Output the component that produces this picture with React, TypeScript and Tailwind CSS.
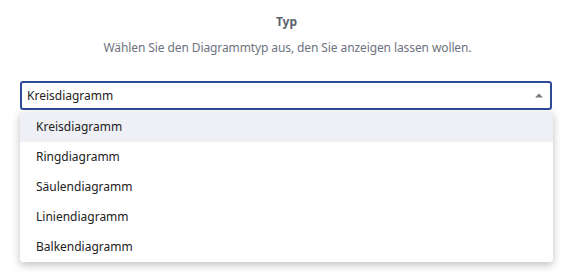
import React from "react";

const items = ["Kreisdiagramm", "Ringdiagramm", "Säulendiagramm", "Liniendiagramm", "Balkendiagramm"];

export default function App() {
  return (
    <div
      className="w-[567px] h-[278px] bg-white overflow-hidden"
      style={{ fontFamily: '"Segoe UI", "Noto Sans", "Open Sans", sans-serif' }}
    >
      <div className="pt-[13px] flex flex-col items-center">
        <div className="text-[12px] leading-[18px] font-bold text-[#5b5f6e] ml-[6px]">Typ</div>
        <div className="mt-[8px] text-[12px] leading-[18px] text-[#6e7280] ml-[8px] tracking-[-0.1px]">
          Wählen Sie den Diagrammtyp aus, den Sie anzeigen lassen wollen.
        </div>
      </div>
      <div className="ml-[20px] w-[532px] mt-[24px] relative">
        <div className="h-[29px] border-2 border-[#2f4a9a] rounded-[3px] flex items-center justify-between pl-[5px] pr-[7px] bg-white">
          <span className="text-[12px] text-[#222]">Kreisdiagramm</span>
          <svg width="8" height="5" viewBox="0 0 8 5">
            <polygon points="0,4.5 8,4.5 4,0.5" fill="#7a7a7a" />
          </svg>
        </div>
        <div className="mt-[2px] w-[533px] bg-white rounded-b-[3px] shadow-[0_3px_8px_rgba(0,0,0,0.25)]">
          {items.map((it, i) => (
            <div
              key={it}
              className={`h-[30px] flex items-center pl-[16px] text-[12px] text-[#222] ${i === 0 ? "bg-[#eff0f5]" : ""}`}
            >
              {it}
            </div>
          ))}
        </div>
      </div>
    </div>
  );
}
